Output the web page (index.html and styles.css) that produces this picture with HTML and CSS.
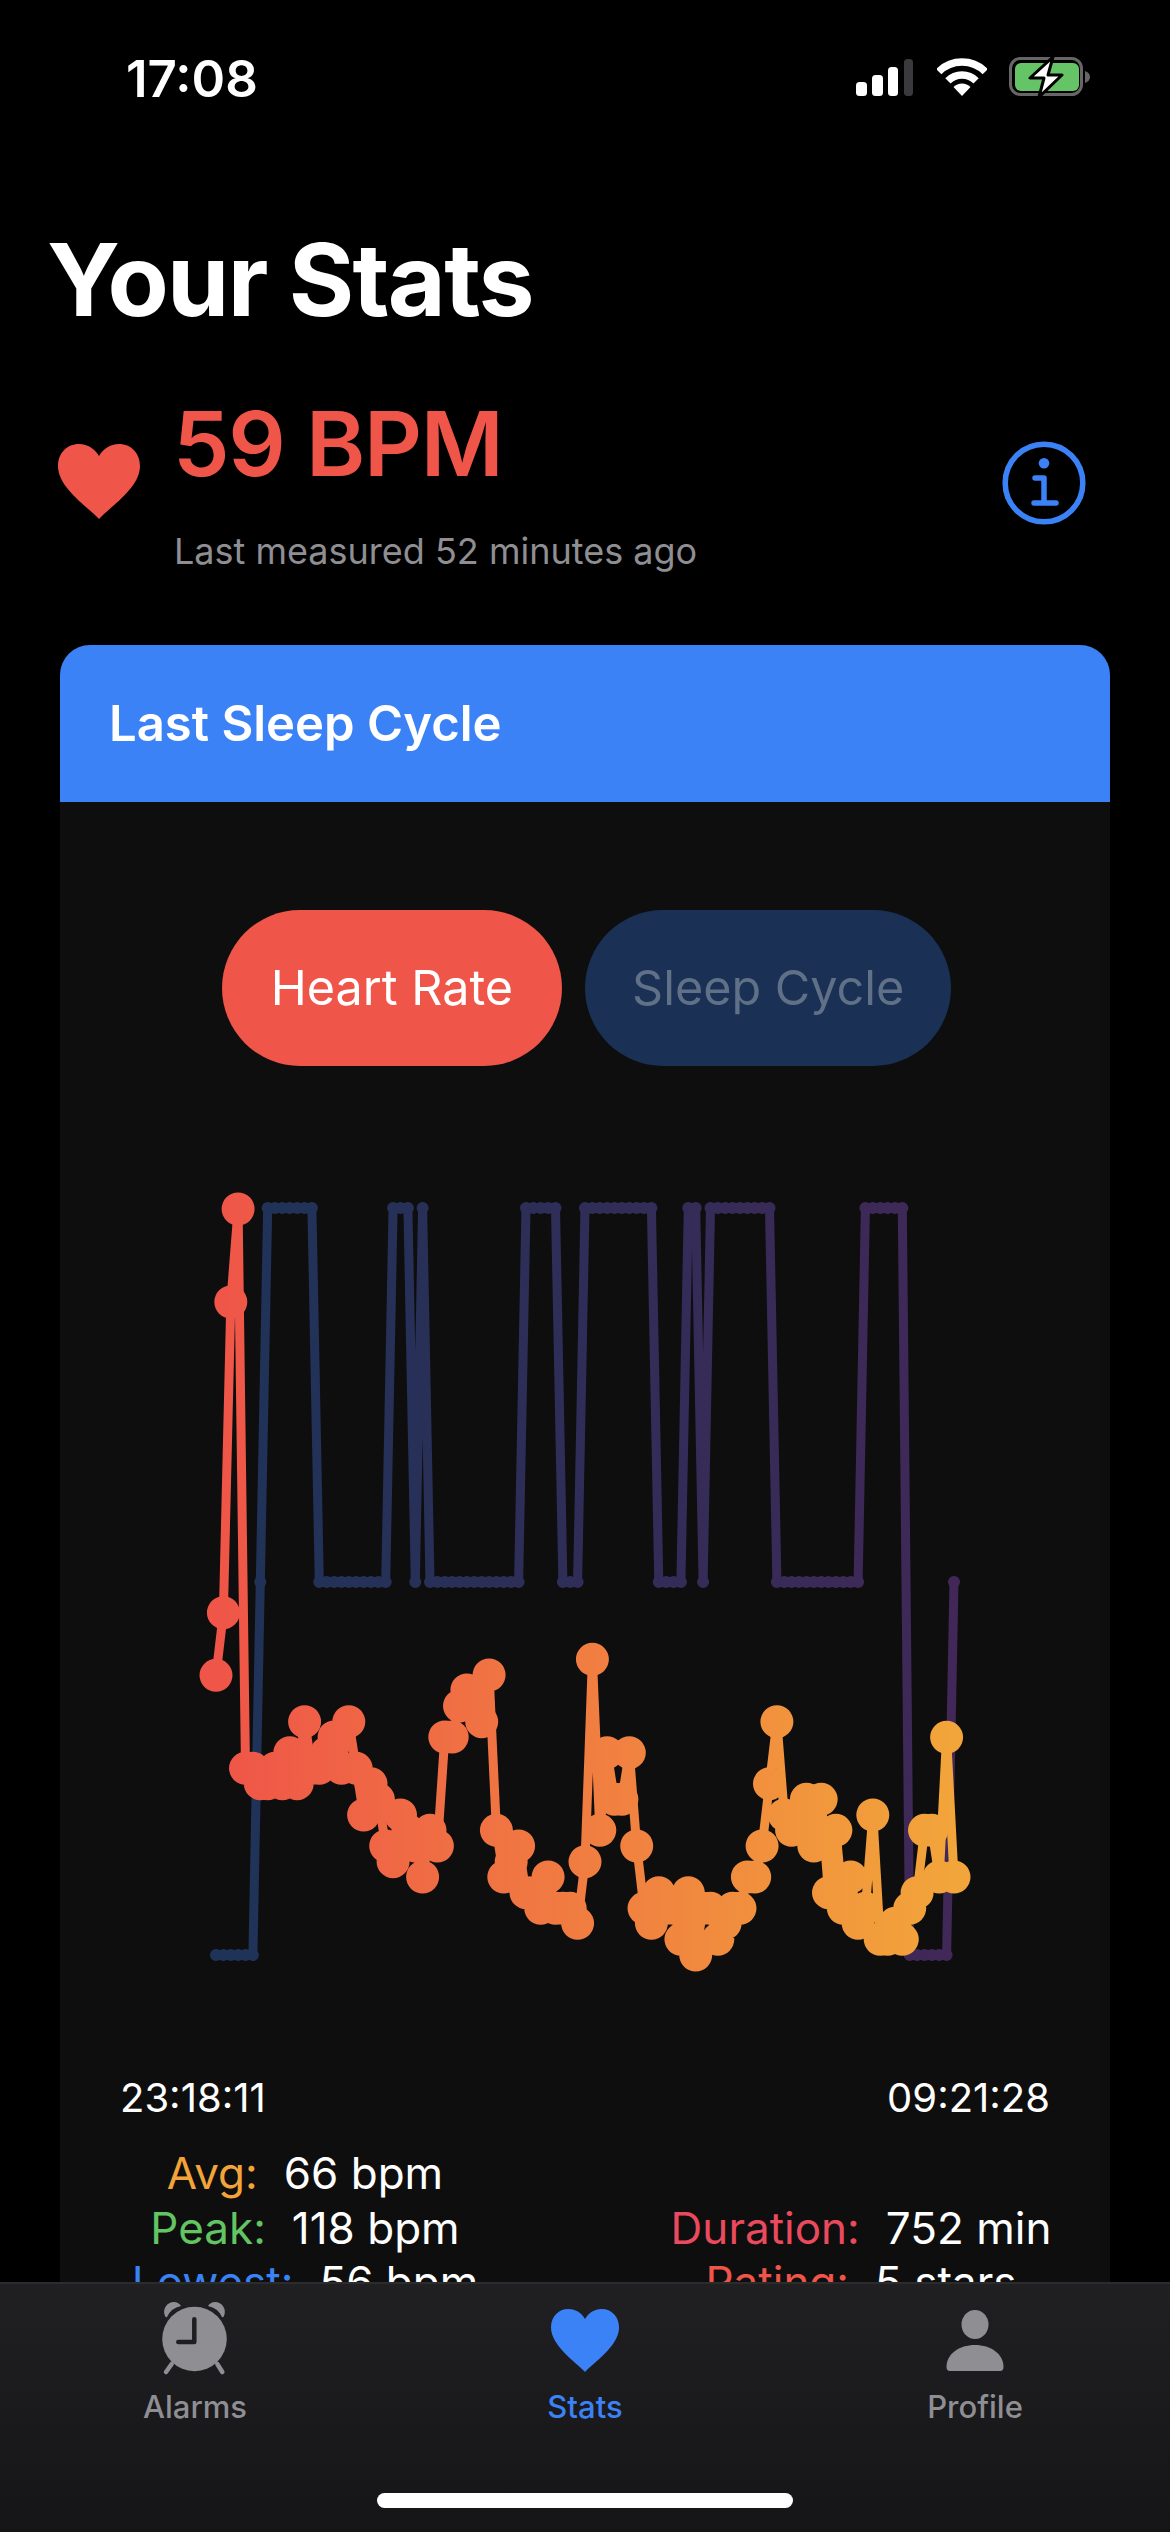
FILE: index.html
```html
<!DOCTYPE html>
<html lang="en">
<head>
    <meta charset="UTF-8">
    <meta name="viewport" content="width=device-width, initial-scale=1.0">
    <title>Your Stats</title>
    <link rel="stylesheet" href="styles.css">
</head>
<body>
    <div class="screen">
        <div class="status-bar">
            <span class="clock">17:08</span>
            <div class="status-icons">
                <svg width="57" height="37" viewBox="0 0 57 37">
                    <rect x="0" y="23" width="11" height="14" rx="3.5" fill="#fff"/>
                    <rect x="16" y="16" width="11" height="21" rx="3.5" fill="#fff"/>
                    <rect x="32" y="8" width="10" height="29" rx="3.5" fill="#fff"/>
                    <rect x="48" y="0" width="9" height="37" rx="3.5" fill="#3a3a3c"/>
                </svg>
                <svg class="wifi" width="50" height="38" viewBox="0 0 50 38">
                    <path d="M1.7 13.7a33 33 0 0 1 46.6 0" fill="none" stroke="#fff" stroke-width="7.5"/>
                    <path d="M10.9 22.9a20 20 0 0 1 28.2 0" fill="none" stroke="#fff" stroke-width="7.5"/>
                    <path d="M25 38L16.5 29a12 12 0 0 1 17 0Z" fill="#fff"/>
                </svg>
                <svg class="battery" width="82" height="42" viewBox="0 0 82 42">
                    <rect x="1.5" y="2.5" width="71" height="36" rx="10" fill="none" stroke="#666" stroke-width="3"/>
                    <rect x="6" y="7" width="64" height="28" rx="6" fill="#65c466"/>
                    <path d="M76 15c3 1 5 3 5 6s-2 5-5 6Z" fill="#666"/>
                    <path d="M44 1L21 22H35L30 41L53 19H39Z" fill="#fff" stroke="#000" stroke-width="3" stroke-linejoin="round"/>
                </svg>
            </div>
        </div>

        <h1 class="page-title">Your Stats</h1>

        <div class="heart-row">
            <svg class="heart-icon" width="82" height="75" viewBox="0 0 82 75">
                <path d="M41 75C30 63 0 44 0 22C0 9 9 0 21 0C30 0 37 5 41 12C45 5 52 0 61 0C73 0 82 9 82 22C82 44 52 63 41 75Z" fill="#ef5548"/>
            </svg>
            <div class="heart-text">
                <div class="bpm">59 BPM</div>
                <div class="measured">Last measured 52 minutes ago</div>
            </div>
            <svg class="info-icon" width="84" height="84" viewBox="0 0 84 84">
                <circle cx="42" cy="42" r="38.8" fill="none" stroke="#3b82f6" stroke-width="5.5"/>
                <circle cx="42" cy="22.3" r="5.3" fill="#3b82f6"/>
                <path d="M33 37H42V62M32 62H54" fill="none" stroke="#3b82f6" stroke-width="5.5" stroke-linecap="round" stroke-linejoin="round"/>
            </svg>
        </div>

        <div class="card">
            <div class="card-header">Last Sleep Cycle</div>
            <div class="toggle-row">
                <div class="toggle toggle-active">Heart Rate</div>
                <div class="toggle toggle-muted">Sleep Cycle</div>
            </div>
            <svg id="chart" class="chart" viewBox="60 1180 1050 810"></svg>
            <div class="time-row">
                <span>23:18:11</span>
                <span>09:21:28</span>
            </div>
            <div class="stat-grid">
                <div class="stat"><span class="c-avg">Avg:</span><span>66 bpm</span></div>
                <div></div>
                <div class="stat"><span class="c-peak">Peak:</span><span>118 bpm</span></div>
                <div class="stat"><span class="c-duration">Duration:</span><span>752 min</span></div>
                <div class="stat"><span class="c-lowest">Lowest:</span><span>56 bpm</span></div>
                <div class="stat"><span class="c-rating">Rating:</span><span>5 stars</span></div>
            </div>
        </div>

        <div class="tab-bar">
            <div class="tab">
                <svg width="70" height="76" viewBox="0 0 70 76">
                    <circle cx="34.5" cy="39" r="32.3" fill="#8e8e93"/>
                    <path d="M5 16C2 9 7 2 14 2C17 2 20 4 21 6Q11 8 7 17Q6 18 5 16Z" fill="#8e8e93"/>
                    <path d="M64 16C67 9 62 2 55 2C52 2 49 4 48 6Q58 8 62 17Q63 18 64 16Z" fill="#8e8e93"/>
                    <path d="M6 72L11.7 64M62.3 72L57.3 64" stroke="#8e8e93" stroke-width="4.5" stroke-linecap="round"/>
                    <path d="M34.3 19.3V42H18.3" fill="none" stroke="#1f1f22" stroke-width="4.5" stroke-linecap="round" stroke-linejoin="round"/>
                </svg>
                <span>Alarms</span>
            </div>
            <div class="tab tab-active">
                <svg width="70" height="76" viewBox="0 0 70 76">
                    <path transform="translate(1 9) scale(.83 .84)" d="M41 75C30 63 0 44 0 22C0 9 9 0 21 0C30 0 37 5 41 12C45 5 52 0 61 0C73 0 82 9 82 22C82 44 52 63 41 75Z" fill="#3b82f6"/>
                </svg>
                <span>Stats</span>
            </div>
            <div class="tab">
                <svg width="70" height="76" viewBox="0 0 70 76">
                    <ellipse cx="35" cy="24.5" rx="13.5" ry="14.5" fill="#8e8e93"/>
                    <path d="M6.5 67C6.5 54 19 45 35 45S63.5 54 63.5 67Q63.5 71 60 71H10Q6.5 71 6.5 67Z" fill="#8e8e93"/>
                </svg>
                <span>Profile</span>
            </div>
            <div class="home-indicator"></div>
        </div>
    </div>
    <script src="chart.js"></script>
</body>
</html>
```

FILE: styles.css
```css
* {
    box-sizing: border-box;
}

body {
    margin: 0;
    background-color: #000;
    font-family: Inter, "Noto Sans", sans-serif;
    color: #fff;
}

.screen {
    position: relative;
    width: 1170px;
    height: 2532px;
    overflow: hidden;
    background-color: #000;
}

.status-bar {
    display: flex;
    justify-content: space-between;
    align-items: center;
    height: 156px;
    padding: 0 79px 0 126px;
}

.clock {
    font-size: 51px;
    font-weight: 600;
}

.status-icons {
    display: flex;
    align-items: center;
    margin-top: -2px;
}

.wifi {
    margin-left: 24px;
}

.battery {
    margin-left: 22px;
}

.page-title {
    margin: 64px 0 0 47px;
    font-size: 100px;
    line-height: 120px;
    font-weight: 700;
    letter-spacing: -1.7px;
}

.heart-row {
    display: flex;
    align-items: flex-start;
    margin-top: 51px;
    padding: 0 84px 0 58px;
}

.heart-icon {
    margin-top: 53px;
}

.heart-text {
    flex: 1;
    margin-left: 33px;
}

.bpm {
    font-size: 90px;
    line-height: 106px;
    font-weight: 600;
    letter-spacing: -1.3px;
    color: #ef5548;
}

.measured {
    margin-top: 32px;
    margin-left: 1px;
    font-size: 36px;
    line-height: 44px;
    color: #8e8e93;
}

.info-icon {
    margin-top: 50px;
}

.card {
    margin: 72px 60px 0;
    background-color: #0e0e0e;
    border-radius: 30px 30px 0 0;
}

.card-header {
    height: 157px;
    padding-left: 49px;
    border-radius: 30px 30px 0 0;
    background-color: #3b82f6;
    font-size: 49px;
    font-weight: 600;
    line-height: 157px;
}

.toggle-row {
    display: flex;
    justify-content: center;
    gap: 23px;
    margin-top: 108px;
    padding-left: 3px;
}

.toggle {
    height: 156px;
    padding: 0 49px;
    border-radius: 78px;
    font-size: 48.5px;
    line-height: 156px;
}

.toggle-active {
    background-color: #ef5548;
}

.toggle-muted {
    padding: 0 47px;
    background-color: #1a3055;
    color: #5f7087;
}

.chart {
    display: block;
    width: 1050px;
    height: 810px;
    margin-top: 114px;
}

.time-row {
    display: flex;
    justify-content: space-between;
    margin-top: 84px;
    padding: 0 60px;
    font-size: 40px;
    line-height: 48px;
}

.stat-grid {
    display: grid;
    grid-template-columns: 490px 498px;
    column-gap: 62px;
    margin-top: 24px;
}

.stat {
    display: flex;
    justify-content: center;
    gap: 26px;
    height: 54.5px;
    font-size: 44px;
    line-height: 54px;
    white-space: nowrap;
}

.c-avg {
    color: #f2a33a;
}

.c-peak {
    color: #62c462;
}

.c-lowest {
    color: #3b82f6;
}

.c-duration {
    color: #ea4a5e;
}

.c-rating {
    color: #ef5548;
}

.tab-bar {
    position: absolute;
    left: 0;
    bottom: 0;
    display: flex;
    width: 1170px;
    height: 250px;
    padding: 16px 0 0;
    border-top: 2px solid #2c2c2e;
    background: linear-gradient(#202023, #151517);
}

.tab {
    flex: 1;
    display: flex;
    flex-direction: column;
    align-items: center;
    font-size: 31px;
    font-weight: 500;
    color: #8e8e93;
}

.tab span {
    margin-top: 12px;
    line-height: 38px;
}

.tab-active {
    color: #3b82f6;
}

.home-indicator {
    position: absolute;
    left: 377px;
    bottom: 24px;
    width: 416px;
    height: 15px;
    border-radius: 8px;
    background-color: #fff;
}
```

FILE: chart.js
```js
// heart rate samples and sleep stages, one entry per sample
const STEP = 7.38;
const START = 216;

const heart = [226, 38, -894, -1173, 505, 505, 551, 551, 505, 551, 458, 551, 365, 505, 505, 458, 411, 505, 365, 505,
    645, 551, 598, 738, 785, 645, 691, 738, 831, 691, 738, 411, 411, 318, 270, 318, 365, 225, 691, 831,
    785, 738, 878, 878, 925, 831, 925, 925, 925, 970, 785, 178, 691, 458, 598, 598, 458, 738, 925, 970,
    878, 925, 925, 1018, 878, 1065, 925, 925, 1018, 970, 925, 925, 831, 831, 738, 551, 365, 645, 691, 645,
    598, 738, 598, 878, 691, 925, 831, 970, 925, 645, 1018, 1018, 970, 1018, 925, 878, 691, 691, 831, 412, 831];

const TOP = 1208, MID = 1582, LOW = 1955;
const stages = [[0, 5, LOW], [6, 6, MID], [7, 13, TOP], [14, 23, MID], [24, 26, TOP], [27, 27, MID], [28, 28, TOP],
    [29, 41, MID], [42, 46, TOP], [47, 49, MID], [50, 59, TOP], [60, 63, MID], [64, 65, TOP], [66, 66, MID],
    [67, 75, TOP], [76, 87, MID], [88, 93, TOP], [94, 99, LOW], [100, 100, MID]];

const heartPts = heart.map((v, i) => [START + i * STEP, 1600 + v / 3]);
const sleepPts = [];
stages.forEach(([from, to, y]) => {
    for (let i = from; i <= to; i++) sleepPts.push([START + i * STEP, y]);
});

const line = pts => 'M' + pts.map(p => p[0].toFixed(1) + ' ' + p[1].toFixed(1)).join('L');
const dots = pts => pts.map(p => 'M' + p[0].toFixed(1) + ' ' + p[1].toFixed(1) + 'h0').join('');
const path = (d, stroke, width) =>
    `<path d="${d}" fill="none" stroke="${stroke}" stroke-width="${width}" stroke-linecap="round" stroke-linejoin="round"/>`;
const grad = (id, a, b) =>
    `<linearGradient id="${id}" gradientUnits="userSpaceOnUse" x1="216" y1="0" x2="954" y2="0"><stop offset="0" stop-color="${a}"/><stop offset="1" stop-color="${b}"/></linearGradient>`;

document.getElementById('chart').innerHTML =
    `<defs>${grad('sleepGrad', '#1e3358', '#412858')}${grad('heartGrad', '#ef5548', '#f2a53a')}</defs>` +
    path(dots(sleepPts), 'url(#sleepGrad)', 12) +
    path(dots(sleepPts), '#0e0e0e', 5) +
    path(line(sleepPts), 'url(#sleepGrad)', 9) +
    path(line(heartPts), 'url(#heartGrad)', 9) +
    path(dots(heartPts), 'url(#heartGrad)', 33);
```
